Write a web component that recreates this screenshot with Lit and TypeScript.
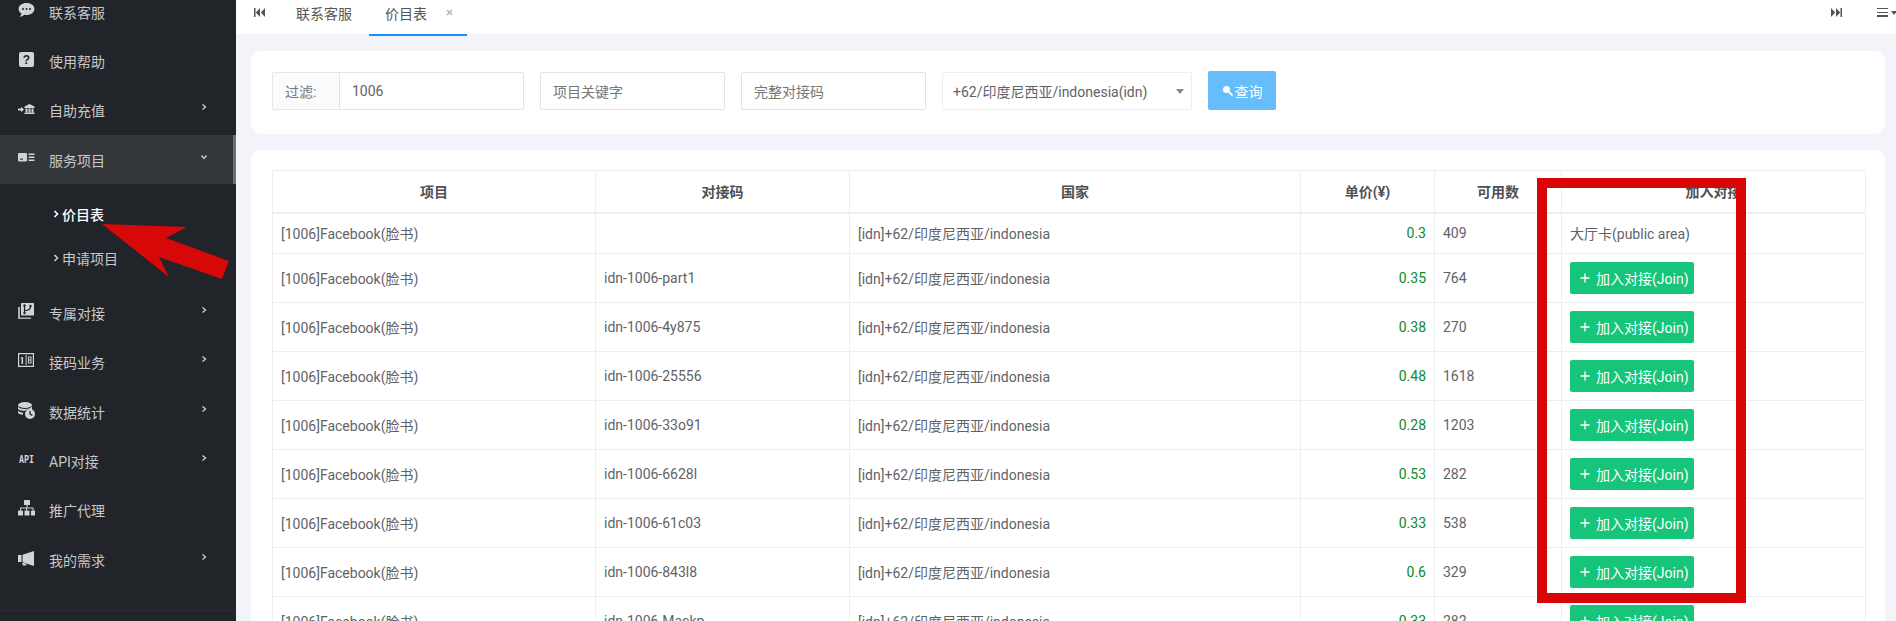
import { LitElement, html, css, svg } from "lit";
import { customElement } from "lit/decorators.js";

const icons: Record<string, unknown> = {
  chat: svg`<path d="M8.500 1C4 1 .6 3.600.6 6.900c0 1.900 1.100 3.500 2.800 4.600-.2 1.200-.9 2.500-1.800 3.300 1.800-.2 3.600-1 4.800-2.100.7.1 1.400.2 2.100.2 4.500 0 7.900-2.700 7.900-6S13 1 8.500 1z"/><circle cx="5" cy="7" r="1" fill="#212429"/><circle cx="8.500" cy="7" r="1" fill="#212429"/><circle cx="12" cy="7" r="1" fill="#212429"/>`,
  help: svg`<rect x="1" y="1" width="15" height="15" rx="2"/><text x="8.500" y="13" font-size="12" font-weight="700" text-anchor="middle" fill="#212429" font-family="Liberation Sans">?</text>`,
  bank: svg`<path d="M0 8.500h3V6.800l3 2.700-3 2.700v-1.700H0zM6.500 6.500 11.500 4l5 2.500V8h-10zM7.500 8.600h2v3.600h-2zM10.500 8.600h2v3.600h-2zM13.500 8.600h2v3.600h-2zM6.500 12.600h10V14h-10z"/>`,
  card: svg`<rect x="0" y="3" width="9" height="8.500" rx="1"/><rect x="2" y="8.500" width="3" height="1.200" fill="#33363b"/><path d="M10.500 3.500h6v1.500h-6zM10.500 6.500h6V8h-6zM10.500 9.500h6V11h-6z"/>`,
  branch: svg`<path d="M2 4H0v11.500a.5.5 0 0 0 .5.5H13v-1.500H2z" opacity=".8"/><path d="M3.500 0h12a.5.5 0 0 1 .5.5V12a.5.5 0 0 1-.5.5h-12A.5.5 0 0 1 3 12V.5a.5.5 0 0 1 .5-.5z"/><path d="M6.500 2.500v8M6.500 7.500c3 0 6-.5 6-4" fill="none" stroke="#212429" stroke-width="1.200"/><circle cx="6.500" cy="2.500" r="1.200" fill="#212429"/><circle cx="6.500" cy="10" r="1.200" fill="#212429"/><circle cx="12.500" cy="3" r="1.200" fill="#212429"/>`,
  code: svg`<path fill-rule="evenodd" d="M0 1h16v14H0zM1.200 2.200v11.600h13.600V2.200z"/><path d="M3.500 5h1.600v7H3.500zM2.800 5.600h1.500v1h-1.500zM7.600 3v10H8.600V3z"/><path fill-rule="evenodd" d="M10 4.500h3.500v7H10zM11 5.500v2h1.500v-2zM11 8.500v2h1.500v-2z"/>`,
  db: svg`<ellipse cx="7" cy="3" rx="7" ry="3"/><path d="M0 4.600c1 1.700 3.800 2.500 7 2.500s6-.8 7-2.500V7c0 .6-.3 1.100-.8 1.500a6 6 0 0 0-7 .5C3 8.900 0 8 0 6.600zM0 8.600c1 1.400 3 2.100 5.300 2.200-.3.7-.4 1.300-.4 2C2.200 12.500 0 11.500 0 10.500z"/><circle cx="12" cy="12" r="5"/><path d="M12 9v3.200l2.400 1.200" fill="none" stroke="#212429" stroke-width="1.300"/>`,
  api: svg`<text x="8.500" y="12" font-size="10" font-weight="700" text-anchor="middle" font-family="DejaVu Sans Mono" textLength="15" lengthAdjust="spacingAndGlyphs">API</text>`,
  sitemap: svg`<rect x="6" y="0" width="6" height="5" rx=".6"/><path d="M8.500 5h1v2.500h6V10.500h-1V8.500h-5.500v2h-1v-2H3v2H2V7.500h6.500z"/><rect x="0" y="10.500" width="5" height="5" rx=".6"/><rect x="6.500" y="10.500" width="5" height="5" rx=".6"/><rect x="13" y="10.500" width="5" height="5" rx=".6"/>`,
  horn: svg`<path d="M0 5h3.500v7H0zM4.500 4.800 16 1v15L4.500 12.200zM4 13l1 2.500h3l.6-1.400-3-1z"/>`,
};

interface Item {
  icon: string;
  label: string;
  arrow?: boolean;
  open?: boolean;
}

const menuTop: Item[] = [
  { icon: "chat", label: "联系客服" },
  { icon: "help", label: "使用帮助" },
  { icon: "bank", label: "自助充值", arrow: true },
  { icon: "card", label: "服务项目", open: true },
];
const menuBottom: Item[] = [
  { icon: "branch", label: "专属对接", arrow: true },
  { icon: "code", label: "接码业务", arrow: true },
  { icon: "db", label: "数据统计", arrow: true },
  { icon: "api", label: "API对接", arrow: true },
  { icon: "sitemap", label: "推广代理" },
  { icon: "horn", label: "我的需求", arrow: true },
];

const rows: [string, string, string][] = [
  ["idn-1006-part1", "0.35", "764"],
  ["idn-1006-4y875", "0.38", "270"],
  ["idn-1006-25556", "0.48", "1618"],
  ["idn-1006-33o91", "0.28", "1203"],
  ["idn-1006-6628l", "0.53", "282"],
  ["idn-1006-61c03", "0.33", "538"],
  ["idn-1006-843l8", "0.6", "329"],
  ["idn-1006-Mackp", "0.33", "282"],
];

@customElement("app-root")
export class AppRoot extends LitElement {
  static styles = css`
    :host {
      display: block;
      position: relative;
      width: 100%;
      height: 621px;
      overflow: hidden;
      background: #f3f4f9;
      font-family: Roboto, "Noto Sans CJK SC", sans-serif;
      font-size: 14px;
      color: #5f6368;
    }
    * { box-sizing: border-box; }
    .shell { display: flex; height: 621px; }
    .side { width: 236px; flex: none; background: #212429; color: #c6c8ca; position: relative; overflow: hidden; }
    .menu { margin-top: -13px; }
    .item { height: 49.33px; display: flex; align-items: center; padding-left: 18px; position: relative; }
    .item.open { background: #33363b; }
    .item.open::after { content: ""; position: absolute; right: 0; top: 0; bottom: 0; width: 3px; background: #6e7074; }
    .ico { width: 17px; height: 17px; fill: #d2d4d6; flex: none; margin-right: 14px; margin-top: -3px; }
    .chev { position: absolute; left: 201px; top: 50%; width: 6px; height: 6px; margin-top: -6px; fill: none; stroke: #c6c8ca; stroke-width: 1.4; }
    .sub { padding: 8px 0; }
    .subitem { height: 44px; display: flex; align-items: center; padding-left: 53px; gap: 3px; }
    .subitem svg { width: 6px; height: 8px; fill: none; stroke: currentColor; stroke-width: 1.6; flex: none; }
    .subitem.on { color: #fff; font-weight: 500; }
    .foot { position: absolute; left: 0; right: 0; top: 610px; border-top: 1px solid #2a2d32; }
    .main { flex: 1; min-width: 0; display: flex; flex-direction: column; overflow: hidden; }
    .top { height: 34px; flex: none; background: #fff; display: flex; align-items: stretch; position: relative; color: #555; }
    .skip { width: 11px; height: 9px; fill: #555; flex: none; align-self: flex-start; margin-top: 8px; }
    .skip.l { margin-left: 18px; }
    .tab { display: flex; align-items: center; height: 26px; }
    .tab.a { margin-left: 31px; }
    .tab.b { margin-left: 17px; padding: 3px 0 0 16px; width: 98px; height: 36px; border-bottom: 2px solid #1890ff; align-items: flex-start; }
    .x { width: 7px; height: 7px; margin-left: 19px; margin-top: 6px; stroke: #b5b5b5; stroke-width: 1.6; flex: none; }
    .spacer { flex: 1; }
    .skip.r { margin-right: 35px; }
    .burger { width: 11px; height: 9px; margin-top: 8px; margin-right: 8px; flex: none; position: relative; background: linear-gradient(#555 0 1.5px, transparent 1.5px 3.75px, #555 3.75px 5.25px, transparent 5.25px 7.5px, #555 7.5px 9px); }
    .burger::after { content: ""; position: absolute; left: 14px; top: 3px; border: 3px solid transparent; border-top: 4px solid #555; border-bottom: 0; }
    .content { flex: 1; min-height: 0; padding: 17px 11px 0 15px; display: flex; flex-direction: column; gap: 16px; }
    .card { background: #fff; border-radius: 11px; padding: 0 21px; }
    .filter { height: 83px; display: flex; align-items: flex-start; gap: 16px; padding-top: 20px; }
    .group { display: flex; width: 252px; height: 38px; margin-top: 1px; }
    .addon { width: 67px; flex: none; background: #fafbfc; border: 1px solid #e4e6e9; border-right: 0; display: flex; align-items: center; padding-left: 12px; color: #777; border-radius: 2px 0 0 2px; }
    .input { width: 185px; height: 38px; flex: none; border: 1px solid #e1e3e6; border-radius: 2px; display: flex; align-items: center; padding-left: 12px; margin-top: 1px; color: #777; }
    .group .input { margin-top: 0; color: #5f6368; border-radius: 0 2px 2px 0; }
    .select { width: 250px; height: 38px; border: 1px solid #eceef0; border-radius: 2px; display: flex; align-items: center; padding-left: 10px; position: relative; margin-top: 1px; }
    .select::after { content: ""; position: absolute; right: 7px; top: 16px; border: 4px solid transparent; border-top: 5px solid #888; border-bottom: 0; }
    .btn { width: 68px; height: 39px; background: #66bdfb; color: #fff; border-radius: 2px; display: flex; align-items: center; justify-content: center; gap: 2px; }
    .btn svg { width: 11px; height: 11px; flex: none; }
    .tablecard { flex: 1; min-height: 0; overflow: hidden; border-radius: 11px 11px 0 0; padding-top: 20px; }
    table { border-collapse: collapse; table-layout: fixed; width: 1593px; }
    col.c1 { width: 323px; }
    col.c2 { width: 254px; }
    col.c3 { width: 451px; }
    col.c4 { width: 134px; }
    col.c5 { width: 127px; }
    col.c6 { width: 304px; }
    th, td { border: 1px solid #eceef1; padding: 0 8px; height: 49px; font-weight: 400; text-align: left; white-space: nowrap; }
    th { height: 42px; text-align: center; font-weight: 700; color: #4d5054; border-bottom-width: 2px; }
    tr.first td { height: 41px; }
    td.price { text-align: right; color: #0c8a2c; }
    .join { width: 124px; height: 32px; background: #17c57a; color: #fff; border-radius: 2px; display: flex; align-items: center; padding-left: 10px; gap: 6px; white-space: nowrap; }
    .join svg { width: 10px; height: 10px; flex: none; stroke: #fff; stroke-width: 1.3; }
    .mark { position: absolute; left: 1537px; top: 178px; width: 209px; height: 425px; border: 10px solid #d90606; }
    .arrow { position: absolute; left: 0; top: 0; width: 240px; height: 300px; fill: #d60808; }
  `;

  private item(i: Item) {
    return html`<div class="item ${i.open ? "open" : ""}">
      <svg class="ico" viewBox="0 0 17 17">${icons[i.icon]}</svg>
      <span>${i.label}</span>
      ${i.arrow ? html`<svg class="chev" viewBox="0 0 6 6"><path d="M1.5 .5 4.5 3 1.5 5.5"/></svg>` : ""}
      ${i.open ? html`<svg class="chev" viewBox="0 0 6 6"><path d="M.5 1.5 3 4.500 5.500 1.500"/></svg>` : ""}
    </div>`;
  }

  render() {
    const sub = html`<svg viewBox="0 0 6 8"><path d="M1.500 1 4.500 4 1.500 7"/></svg>`;
    return html`
      <div class="shell">
        <aside class="side">
          <div class="menu">
            ${menuTop.map((i) => this.item(i))}
            <div class="sub">
              <div class="subitem on">${sub}<span>价目表</span></div>
              <div class="subitem">${sub}<span>申请项目</span></div>
            </div>
            ${menuBottom.map((i) => this.item(i))}
          </div>
          <div class="foot"></div>
        </aside>
        <main class="main">
          <div class="top">
            <svg class="skip l" viewBox="0 0 11 9"><path d="M0 0h1.500v9H0zM6 0v9L1.800 4.500zM11 0v9L6.800 4.500z"/></svg>
            <div class="tab a">联系客服</div>
            <div class="tab b"><span>价目表</span><svg class="x" viewBox="0 0 7 7"><path d="M1 1l5 5M6 1 1 6"/></svg></div>
            <div class="spacer"></div>
            <svg class="skip r" viewBox="0 0 11 9"><path d="M11 0H9.500v9H11zM5 0v9L9.200 4.500zM0 0v9L4.200 4.500z"/></svg>
            <div class="burger"></div>
          </div>
          <div class="content">
            <section class="card filter">
              <div class="group">
                <div class="addon">过滤:</div>
                <div class="input">1006</div>
              </div>
              <div class="input">项目关键字</div>
              <div class="input">完整对接码</div>
              <div class="select">+62/印度尼西亚/indonesia(idn)</div>
              <div class="btn">
                <svg viewBox="0 0 11 11"><circle cx="4.500" cy="4.500" r="3.500" fill="#fff"/><path d="M7 7l3.500 3.500" stroke="#fff" stroke-width="1.800"/></svg>
                <span>查询</span>
              </div>
            </section>
            <section class="card tablecard">
              <table>
                <colgroup>
                  <col class="c1" /><col class="c2" /><col class="c3" /><col class="c4" /><col class="c5" /><col class="c6" />
                </colgroup>
                <thead>
                  <tr><th>项目</th><th>对接码</th><th>国家</th><th>单价(¥)</th><th>可用数</th><th>加入对接</th></tr>
                </thead>
                <tbody>
                  <tr class="first">
                    <td>[1006]Facebook(脸书)</td><td></td><td>[idn]+62/印度尼西亚/indonesia</td>
                    <td class="price">0.3</td><td>409</td><td>大厅卡(public area)</td>
                  </tr>
                  ${rows.map(
                    (r) => html`<tr>
                      <td>[1006]Facebook(脸书)</td><td>${r[0]}</td><td>[idn]+62/印度尼西亚/indonesia</td>
                      <td class="price">${r[1]}</td><td>${r[2]}</td>
                      <td><div class="join">
                        <svg viewBox="0 0 10 10"><path d="M5 .5v9M.5 5h9"/></svg>
                        <span>加入对接(Join)</span>
                      </div></td>
                    </tr>`
                  )}
                </tbody>
              </table>
            </section>
          </div>
        </main>
      </div>
      <svg class="arrow" viewBox="0 0 240 300"><polygon points="102,224 187,227 166,238 229,261 222,279 159,257 169,277"/></svg>
      <div class="mark"></div>
    `;
  }
}
